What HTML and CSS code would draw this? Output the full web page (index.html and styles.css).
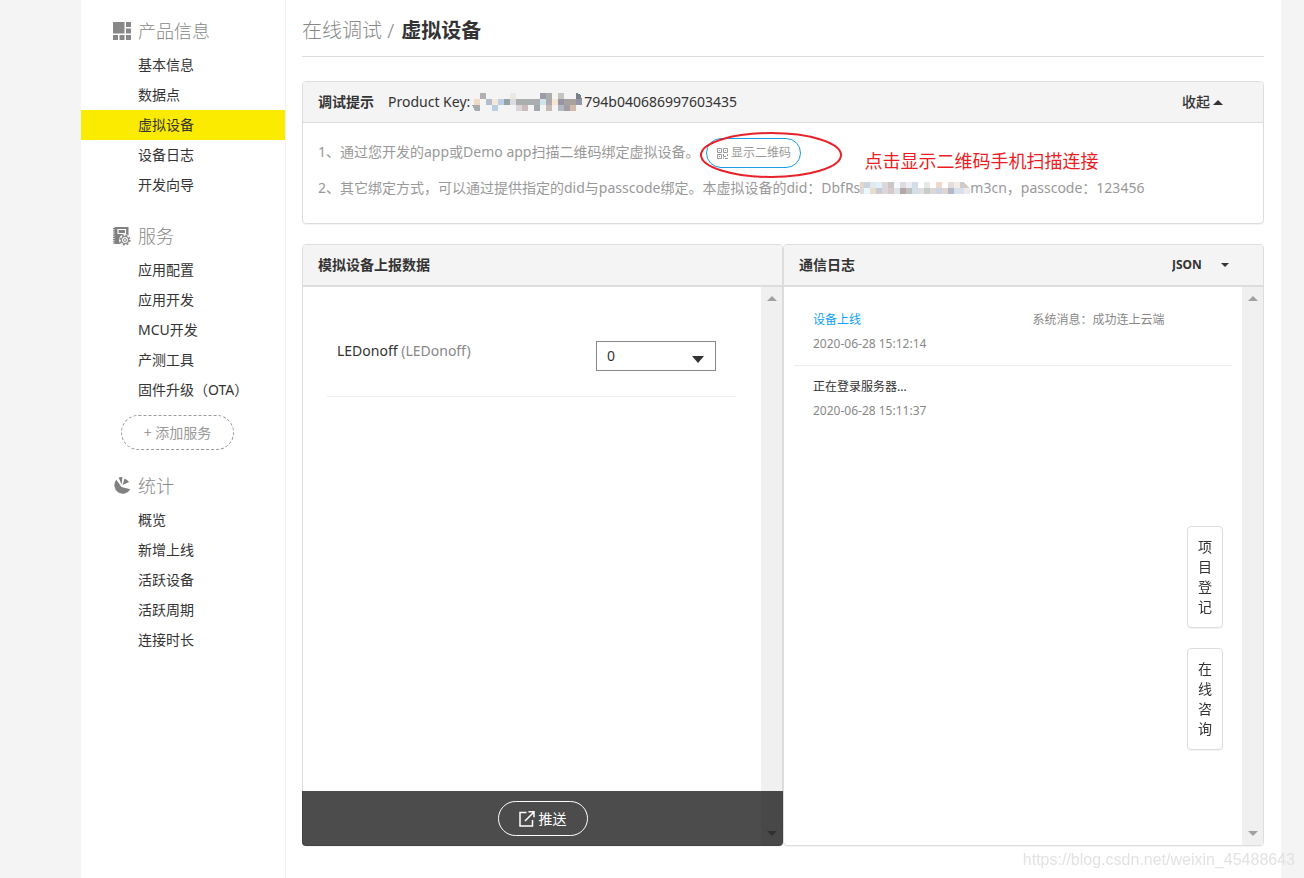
FILE: index.html
```html
<!DOCTYPE html>
<html lang="zh-CN">
<head>
<meta charset="utf-8">
<title>虚拟设备</title>
<link rel="stylesheet" href="styles.css">
</head>
<body>
<div class="page">
  <nav class="sidebar">
    <section class="group">
      <h2 class="group-title">
        <svg class="group-icon" width="18" height="18" viewBox="0 0 18 18" fill="#888"><path d="M0 0h11.5v11.5H0zM13 0h5v5h-5zM13 6.500h5v5h-5zM0 13h5v5H0zM6.500 13h5v5h-5zM13 13h5v5h-5z"/></svg>
        产品信息
      </h2>
      <ul class="menu">
        <li><a href="#">基本信息</a></li>
        <li><a href="#">数据点</a></li>
        <li><a class="active" href="#">虚拟设备</a></li>
        <li><a href="#">设备日志</a></li>
        <li><a href="#">开发向导</a></li>
      </ul>
    </section>
    <section class="group">
      <h2 class="group-title">
        <svg class="group-icon" width="18" height="20" viewBox="0 0 18 20"><path d="M1.500 1h14v17h-14z" fill="#808080"/><path d="M1 2v16" stroke="#808080" stroke-width="2" stroke-dasharray="1.200 1"/><path d="M5 3.500h7.500v4H5z" fill="none" stroke="#fff" stroke-width="1.200"/><circle cx="12" cy="14" r="6" fill="#fff"/><circle cx="12" cy="14" r="4.800" fill="none" stroke="#888" stroke-width="1.600" stroke-dasharray="1.900 1.870"/><circle cx="12" cy="14" r="3.600" fill="none" stroke="#888" stroke-width="1.300"/><circle cx="12" cy="14" r="1.500" fill="none" stroke="#888"/></svg>
        服务
      </h2>
      <ul class="menu">
        <li><a href="#">应用配置</a></li>
        <li><a href="#">应用开发</a></li>
        <li><a href="#">MCU开发</a></li>
        <li><a href="#">产测工具</a></li>
        <li><a href="#">固件升级（OTA）</a></li>
      </ul>
      <button class="add-service" type="button">+ 添加服务</button>
    </section>
    <section class="group">
      <h2 class="group-title">
        <svg class="group-icon" width="18" height="20" viewBox="0 0 18 20" fill="#808080"><path d="M8.500 11 3.300 3.700A8.500 8.500 0 1 0 17.300 13.200z"/><path d="M8.700 8.800 5.600 1.500Q7.400.7 9.300 1z"/><path d="M9.600 9 11.500 2.400Q14.500 3.500 16.100 6z"/></svg>
        统计
      </h2>
      <ul class="menu">
        <li><a href="#">概览</a></li>
        <li><a href="#">新增上线</a></li>
        <li><a href="#">活跃设备</a></li>
        <li><a href="#">活跃周期</a></li>
        <li><a href="#">连接时长</a></li>
      </ul>
    </section>
  </nav>

  <main class="main">
    <h1 class="title"><span class="crumb">在线调试 /</span> 虚拟设备</h1>

    <section class="panel">
      <header class="panel-head">
        <h3>调试提示</h3>
        <p class="key">Product Key:<svg class="mosaic" width="112" height="18" viewBox="0 0 112 18" shape-rendering="crispEdges"><path fill="#b0b0b4" d="M9 0h6v6H9z"/><path fill="#efe8e2" d="M39 0h6v6h-6z"/><path fill="#9a9ca8" d="M69 0h6v6h-6z"/><path fill="#adadad" d="M75 0h6v6h-6z"/><path fill="#c4c4c0" d="M87 0h6v6h-6z"/><path fill="#788088" d="M105 0l4 1 2 5h-6z"/><path fill="#efdcc8" d="M3 6h6v6H3z"/><path fill="#b4bcce" d="M15 6h6v6h-6z"/><path fill="#f5e8d4" d="M21 6h6v6h-6z"/><path fill="#bdcfe8" d="M27 6h6v6h-6z"/><path fill="#93a3a3" d="M33 6h6v6h-6z"/><path fill="#dcdce0" d="M39 6h6v6h-6z"/><path fill="#aaaeae" d="M45 6h24v6H45z"/><path fill="#d0e4ee" d="M69 6h6v6h-6z"/><path fill="#b0aaac" d="M75 6h6v6h-6z"/><path fill="#f6e6d2" d="M81 6h6v6h-6z"/><path fill="#9894a8" d="M87 6h6v6h-6z"/><path fill="#a8a29f" d="M93 6h12v6H93z"/><path fill="#9496a8" d="M105 6h6v6h-6z"/><path fill="#a8acac" d="M1 12h8v6H4z"/><path fill="#b8cfe4" d="M21 12h6v6h-6z"/><path fill="#dcd4d8" d="M45 12h6v6h-6z"/><path fill="#c8bcbc" d="M51 12h6v6h-6z"/><path fill="#a3a9ad" d="M63 12h6v6h-6z"/><path fill="#c6bab8" d="M75 12h6v6h-6z" /><path fill="#b4b8c0" d="M87 12h6v6h-6z"/><path fill="#a09ca8" d="M93 12h6v6h-6z"/><path fill="#d0bba8" d="M99 12h6v6h-6z"/></svg>794b040686997603435</p>
        <button class="collapse" type="button">收起<svg width="10" height="5" viewBox="0 0 10 5"><path d="M5 0l5 5H0z" fill="#333"/></svg></button>
      </header>
      <ol class="tips">
        <li>1、通过您开发的app或Demo app扫描二维码绑定虚拟设备。<span class="qr"><button class="qr-button" type="button"><svg width="11" height="11" viewBox="0 0 11 11" fill="none" stroke="#999"><path d="M.5.5h4v4h-4zM6.500.5h4v4h-4zM.5 6.500h4v4h-4zM2 2.500h1M8 2.500h1M2 8.500h1M6.500 6v2.500H9M10.500 6v2M6.500 9.500v1.500M8 10.500h3"/></svg>显示二维码</button><svg class="ring" width="142" height="46" viewBox="0 0 142 46"><ellipse cx="71" cy="23" rx="70" ry="22" fill="none" stroke="#e8222a" stroke-width="2"/></svg><span class="note">点击显示二维码手机扫描连接</span></span></li>
        <li>2、其它绑定方式，可以通过提供指定的did与passcode绑定。本虚拟设备的did：DbfRs<svg class="mosaic did" width="110" height="12" viewBox="0 0 110 12" shape-rendering="crispEdges"><path fill="#e2d6cf" d="M0 0h4v6H0z"/><path fill="#cdd2de" d="M4 0h6v6H4z"/><path fill="#dfe9ef" d="M10 0h6v6h-6z"/><path fill="#e2effc" d="M16 0h6v6h-6z"/><path fill="#ddd8d8" d="M22 0h6v6h-6z"/><path fill="#ccc5c5" d="M28 0h6v6h-6z"/><path fill="#f5f8fc" d="M34 0h6v6h-6z"/><path fill="#ddd" d="M40 0h6v6h-6z"/><path fill="#e8edf6" d="M46 0h6v6h-6z"/><path fill="#d4dce8" d="M52 0h6v6h-6z"/><path fill="#e7e9e4" d="M64 0h6v6h-6z"/><path fill="#f0d9ca" d="M76 0h6v6h-6z"/><path fill="#e4dddd" d="M88 0h6v6h-6z"/><path fill="#f4ece6" d="M94 0h6v6h-6z"/><path fill="#d2cac9" d="M100 0h4l5 6h-9z"/><path fill="#dedada" d="M0 6h4v6H0z"/><path fill="#e8f8ff" d="M4 6h6v6H4z"/><path fill="#e6ddcd" d="M10 6h6v6h-6z"/><path fill="#cacbd1" d="M16 6h6v6h-6z"/><path fill="#dad7da" d="M22 6h6v6h-6z"/><path fill="#d5cac8" d="M28 6h6v6h-6z"/><path fill="#dee2e9" d="M34 6h6v6h-6z"/><path fill="#b4a7a5" d="M40 6h6v6h-6z"/><path fill="#bfc0c3" d="M46 6h6v6h-6z"/><path fill="#d3dee7" d="M52 6h6v6h-6z"/><path fill="#dfdfe1" d="M58 6h6v6h-6z"/><path fill="#c9cbca" d="M64 6h6v6h-6z"/><path fill="#d9d8d7" d="M70 6h6v6h-6z"/><path fill="#cbd4e4" d="M76 6h6v6h-6z"/><path fill="#ded6d1" d="M82 6h6v6h-6z"/><path fill="#b2b8c6" d="M88 6h6v6h-6z"/><path fill="#d8e0ee" d="M94 6h10v6H94z"/><path fill="#eaeaec" d="M104 6h6v6h-6z"/></svg>m3cn，passcode：123456</li>
      </ol>
    </section>

    <div class="columns">
      <section class="panel column">
        <header class="panel-head thick"><h3>模拟设备上报数据</h3></header>
        <div class="column-body">
          <div class="fields">
            <div class="field">
              <label for="led">LEDonoff <span>(LEDonoff)</span></label>
              <div class="picker">
                <select id="led"><option>0</option><option>1</option></select>
                <svg width="12" height="7" viewBox="0 0 12 7"><path d="M0 0h12L6 7z" fill="#333"/></svg>
              </div>
            </div>
          </div>
          <div class="scroll">
            <svg width="10" height="5" viewBox="0 0 10 5"><path d="M5 0l5 5H0z" fill="#a0a0a0"/></svg>
            <svg width="10" height="5" viewBox="0 0 10 5"><path d="M0 0h10L5 5z" fill="#a0a0a0"/></svg>
          </div>
        </div>
        <footer class="push-bar">
          <button class="push" type="button"><svg width="16" height="16" viewBox="0 0 16 16" fill="none" stroke="#fff" stroke-width="1.500"><path d="M7.500 1.500H1V15h12.500V9M9.500.8H15v5.500M15 1 6 10"/></svg>推送</button>
        </footer>
      </section>

      <section class="panel column">
        <header class="panel-head thick">
          <h3>通信日志</h3>
          <div class="format">
            <select aria-label="格式"><option>JSON</option><option>HEX</option></select>
            <svg width="8" height="4" viewBox="0 0 8 4"><path d="M0 0h8L4 4z" fill="#333"/></svg>
          </div>
        </header>
        <div class="column-body">
          <ul class="log">
            <li>
              <div><a href="#">设备上线</a><time>2020-06-28 15:12:14</time></div>
              <p>系统消息：成功连上云端</p>
            </li>
            <li>
              <div><span>正在登录服务器...</span><time>2020-06-28 15:11:37</time></div>
            </li>
          </ul>
          <div class="scroll">
            <svg width="10" height="5" viewBox="0 0 10 5"><path d="M5 0l5 5H0z" fill="#a0a0a0"/></svg>
            <svg width="10" height="5" viewBox="0 0 10 5"><path d="M0 0h10L5 5z" fill="#a0a0a0"/></svg>
          </div>
        </div>
      </section>
    </div>
  </main>
</div>

<aside class="float">
  <button type="button">项目登记</button>
  <button type="button">在线咨询</button>
</aside>
<div class="watermark">https://blog.csdn.net/weixin_45488643</div>
</body>
</html>
```
FILE: styles.css
```css
* {
  box-sizing: border-box;
}

body {
  margin: 0;
  padding: 0 23px 0 81px;
  background: #f4f4f4;
  color: #333;
  font: 14px/20px "Noto Sans", "Noto Sans CJK SC", sans-serif;
}

h1, h2, h3, p, ul, ol {
  margin: 0;
  padding: 0;
  font-size: inherit;
  list-style: none;
}

a {
  color: inherit;
  text-decoration: none;
}

button, select {
  margin: 0;
  padding: 0;
  border: 0;
  background: none;
  color: inherit;
  font: inherit;
}

select {
  appearance: none;
}

.page {
  display: flex;
  min-height: 100vh;
  background: #fff;
}

/* Sidebar */

.sidebar {
  flex: 0 0 205px;
  padding-top: 18px;
  border-right: 1px solid #f0f0f0;
}

.group {
  margin-bottom: 23px;
}

.group-title {
  display: flex;
  align-items: center;
  gap: 7px;
  margin-bottom: 6px;
  padding-left: 32px;
  color: #888;
  font-size: 18px;
  font-weight: 300;
  line-height: 26px;
}

.menu a {
  display: block;
  padding-left: 57px;
  line-height: 30px;
}

.menu .active {
  background: #fbeb00;
}

.add-service {
  display: block;
  width: 113px;
  height: 35px;
  margin: 10px 0 0 40px;
  border: 1px dashed #999;
  border-radius: 18px;
  color: #999;
}

/* Main area */

.main {
  flex: 1;
  display: flex;
  flex-direction: column;
  min-width: 0;
  padding: 0 17px 32px 16px;
}

.title {
  margin-bottom: 24px;
  padding: 17px 0 11px;
  border-bottom: 1px solid #ddd;
  font-size: 20px;
  line-height: 28px;
}

.crumb {
  margin-right: 2px;
  color: #888;
  font-weight: 300;
}

.panel {
  border: 1px solid #ddd;
  border-radius: 4px;
  box-shadow: 0 1px 1px rgba(0, 0, 0, .05);
}

.panel-head {
  display: flex;
  align-items: center;
  gap: 14px;
  height: 41px;
  padding: 0 15px;
  border-bottom: 1px solid #ddd;
  border-radius: 3px 3px 0 0;
  background: #f4f4f4;
}

.thick {
  height: 42px;
  border-bottom-width: 2px;
}

.key {
  display: flex;
  align-items: center;
  gap: 1px;
}

.collapse {
  display: flex;
  align-items: center;
  gap: 3px;
  margin-left: auto;
  padding-right: 25px;
  font-weight: 500;
}

.tips {
  display: grid;
  grid-auto-rows: 30px;
  gap: 6px;
  padding: 14px 15px 20px;
  color: #999;
  line-height: 30px;
}

.did {
  vertical-align: -1px;
}

.qr {
  position: relative;
  display: inline-block;
  margin-left: 7px;
  vertical-align: top;
}

.qr-button {
  display: flex;
  align-items: center;
  justify-content: center;
  gap: 3px;
  width: 95px;
  height: 30px;
  margin-top: 1px;
  border: 1px solid #1a9be6;
  border-radius: 15px;
  font-size: 12px;
}

.ring {
  position: absolute;
  top: -5px;
  left: -6px;
  pointer-events: none;
}

.note {
  position: absolute;
  top: 9px;
  left: 158px;
  color: #ed1c24;
  font-size: 18px;
  white-space: nowrap;
}

.columns {
  flex: 1;
  display: grid;
  grid-template-columns: 1fr 1fr;
  margin-top: 20px;
}

.column {
  position: relative;
  display: flex;
  flex-direction: column;
}

.column-body {
  flex: 1;
  display: flex;
}

.fields {
  flex: 1;
  padding: 29px 25px 0 24px;
}

.field {
  display: flex;
  justify-content: space-between;
  padding: 25px 20px 25px 10px;
  border-bottom: 1px solid #eee;
}

.field label span {
  color: #888;
}

.picker {
  position: relative;
  width: 120px;
}

.picker select {
  display: block;
  width: 100%;
  height: 30px;
  padding-left: 10px;
  border: 1px solid #888;
}

.picker svg {
  position: absolute;
  top: 15px;
  right: 12px;
  pointer-events: none;
}

.scroll {
  flex: 0 0 21px;
  display: flex;
  flex-direction: column;
  align-items: center;
  justify-content: space-between;
  padding: 9px 0;
  background: #f0f0f0;
}

.push-bar {
  position: absolute;
  right: -1px;
  bottom: -1px;
  left: -1px;
  display: flex;
  justify-content: center;
  padding: 10px 0;
  border-radius: 0 0 4px 4px;
  background: rgba(0, 0, 0, .7);
}

.push {
  display: flex;
  align-items: center;
  justify-content: center;
  gap: 4px;
  width: 90px;
  height: 35px;
  border: 1px solid #fff;
  border-radius: 18px;
  color: #fff;
}

.format {
  position: relative;
  width: 58px;
  margin-left: auto;
  margin-right: 18px;
}

.format select {
  display: block;
  width: 100%;
  font-size: 12px;
  font-weight: 700;
}

.format svg {
  position: absolute;
  top: 8px;
  right: 1px;
  pointer-events: none;
}

.log {
  flex: 1;
  padding: 12px 10px 0;
  font-size: 12px;
  line-height: 24px;
}

.log li {
  display: grid;
  grid-template-columns: 1fr 1fr;
  padding: 9px 0 9px 19px;
}

.log li + li {
  border-top: 1px solid #eee;
}

.log p {
  padding-left: 10px;
  color: #888;
}

.log a {
  color: #0d9ff2;
}

.log time {
  display: block;
  color: #888;
}

/* Floating actions */

.float {
  position: fixed;
  right: 81px;
  bottom: 128px;
  display: grid;
  gap: 20px;
}

.float button {
  width: 36px;
  padding: 10px;
  border: 1px solid #ddd;
  border-radius: 4px;
  background: #fff;
  box-shadow: 0 1px 1px rgba(0, 0, 0, .05);
  line-height: 20px;
  word-break: break-all;
}

.watermark {
  position: fixed;
  right: 9px;
  bottom: 8px;
  color: #e2e2e2;
  font: 16px/20px "Liberation Sans", sans-serif;
}
```
